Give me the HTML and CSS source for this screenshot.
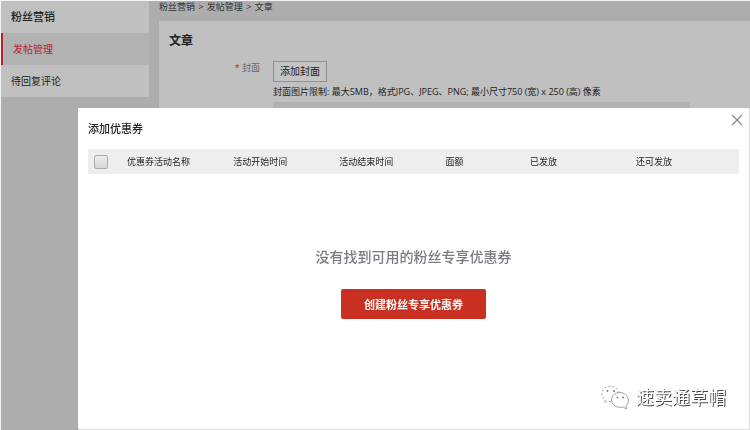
FILE: index.html
```html
<!DOCTYPE html>
<html lang="zh">
<head>
    <meta charset="UTF-8">
    <title>发帖管理</title>
    <link rel="stylesheet" href="styles.css">
</head>
<body>
    <div class="page">
        <ul class="side">
            <li class="side_title">粉丝营销</li>
            <li><a class="current" href="#">发帖管理</a></li>
            <li><a href="#">待回复评论</a></li>
        </ul>
        <div class="main">
            <div class="crumb"><a href="#">粉丝营销</a> <i>&gt;</i> <a href="#">发帖管理</a> <i>&gt;</i> <span>文章</span></div>
            <div class="panel">
                <h2>文章</h2>
                <div class="row">
                    <label class="label" for="cover"><i>*</i> 封面</label>
                    <div class="field">
                        <button type="button" class="btn_add" id="cover">添加封面</button>
                        <p class="tip">封面图片限制: 最大5MB，格式JPG、JPEG、PNG; 最小尺寸750 (宽) x 250 (高) 像素</p>
                        <div class="preview"></div>
                    </div>
                </div>
            </div>
        </div>
    </div>

    <!-- 添加优惠券弹窗 -->
    <div class="dialog" role="dialog" aria-labelledby="dialog_title">
        <button type="button" class="close" aria-label="关闭">
            <svg width="12" height="12" viewBox="0 0 12 12"><path d="M1 1L11 11M11 1L1 11" fill="none" stroke="#858585" stroke-width="1.2"/></svg>
        </button>
        <h3 id="dialog_title">添加优惠券</h3>
        <table class="coupon">
            <thead>
                <tr>
                    <th class="check"><input type="checkbox" aria-label="全选"></th>
                    <th class="col">优惠券活动名称</th>
                    <th class="col">活动开始时间</th>
                    <th class="col">活动结束时间</th>
                    <th class="col_small">面额</th>
                    <th class="col">已发放</th>
                    <th>还可发放</th>
                </tr>
            </thead>
        </table>
        <div class="empty">
            <p>没有找到可用的粉丝专享优惠券</p>
            <button type="button" class="btn_create">创建粉丝专享优惠券</button>
        </div>
        <div class="mark">
            <svg width="29" height="25" viewBox="0 0 29 25" fill="none" stroke="#8a8a8a" stroke-width="0.8">
                <path d="M10 16.5C8.500 16.700 7.500 16.500 6.500 16.200L3.500 18L4.200 15C-1 11 0 4 6 1.700C11 0 17 2.500 18 7.500" stroke-dasharray="2 2"/>
                <path d="M19 7.500C13.500 7.500 10.500 11 10.500 15C10.500 20 16 23.500 22 22L25.500 24L24.800 21C30 17 27 7.500 19 7.500Z"/>
                <g fill="#777" stroke="none">
                    <circle cx="6.500" cy="6" r="1"/>
                    <circle cx="13" cy="6" r="1"/>
                    <circle cx="16.500" cy="12.500" r="0.900"/>
                    <circle cx="22" cy="12.500" r="0.900"/>
                </g>
            </svg>
            <span>速卖通草帽</span>
        </div>
    </div>
</body>
</html>
```
FILE: styles.css
```css
*{
    margin:0;
    padding:0;
    box-sizing: border-box;
}
ul,li{
    list-style: none;
}
a{
    color:inherit;
    text-decoration: none;
}
i{
    font-style: normal;
}
body,button{
    font-family: "Open Sans","Noto Sans CJK SC",sans-serif;
}
body{
    background:#f4f4f4;
    color:#222;
    font-size:10px;
    padding:1px 0 0 1px;
}
.page{
    display: flex;
    align-items: flex-start;
    gap:10px;
    height: calc(100vh - 1px);
    overflow: hidden;
    background:#adadad;
}
.side{
    flex:0 0 148px;
    background:#c0c0c0;
    line-height: 32px;
}
.side_title{
    padding-left:10px;
    font-size:11px;
    font-weight: 500;
}
.side a{
    display: block;
    padding-left:10px;
}
.side .current{
    background:#b2b2b2;
    border-left:2px solid #b5202b;
    color:#b5202b;
}
.main{
    flex:1;
}
.crumb{
    height: 20px;
    line-height: 12px;
    font-size:9px;
    color:#333;
}
.crumb i{
    margin:0 1px;
}
.panel{
    min-height: 400px;
    padding:10px;
    background:#c0c0c0;
}
.panel h2{
    line-height: 20px;
    font-size:12px;
    font-weight: bold;
}
.row{
    display: flex;
    gap:13px;
    margin-top:10px;
}
.label{
    flex:0 0 91px;
    text-align: right;
    line-height: 14px;
    font-size:9px;
    color:#666;
}
.label i{
    color:#c41f10;
}
.field{
    flex:1;
    padding-right:50px;
}
.btn_add{
    display: block;
    height: 21px;
    padding:0 6px;
    border:1px solid #929292;
    background:#c4c4c4;
    font-size:10px;
    line-height: 19px;
    color:#222;
}
.tip{
    line-height: 20px;
    font-size:9px;
    white-space: nowrap;
}
.preview{
    height: 200px;
    background:#b2b2b2;
}
.dialog{
    position: fixed;
    top:108px;
    right:1px;
    bottom:1px;
    left:78px;
    padding:10px;
    background:#fff;
    box-shadow: 1px 1px 0 #dedede;
}
.close{
    position: absolute;
    top:6px;
    right:6px;
    width:12px;
    height: 12px;
    border:0;
    background:none;
    cursor: pointer;
}
.close svg{
    display: block;
}
.dialog h3{
    line-height: 22px;
    font-size:11px;
    font-weight: 500;
}
.coupon{
    width:100%;
    margin-top:9px;
    border-collapse: collapse;
    table-layout: fixed;
    background:#eee;
}
.coupon th{
    height: 25px;
    text-align: left;
    font-size:9px;
    font-weight: normal;
    line-height: 14px;
    white-space: nowrap;
}
.coupon .check{
    width:6%;
    padding-left:6px;
}
.coupon .col{
    width:16.3%;
}
.coupon .col_small{
    width:13%;
}
.coupon input{
    display: block;
    width:14px;
    height: 14px;
    appearance: none;
    border:1px solid #aaa;
    border-radius: 2px;
    background:linear-gradient(#eee,#d6d6d6);
}
.empty{
    margin-top:72px;
    text-align: center;
}
.empty p{
    line-height: 22px;
    font-size:14px;
    font-weight: 500;
    color:#7b7b83;
}
.btn_create{
    height: 30px;
    margin-top:21px;
    padding:0 23px;
    border:0;
    border-radius: 2px;
    background:#c93022;
    color:#fff;
    font-size:11px;
    font-weight: bold;
    cursor: pointer;
}
.mark{
    position: absolute;
    right:23px;
    bottom:18px;
    display: flex;
    align-items: center;
    gap:6px;
    line-height: 28px;
    font-size:18px;
    color:#fff;
    text-shadow: 1px 1px 0 #444;
}
```
